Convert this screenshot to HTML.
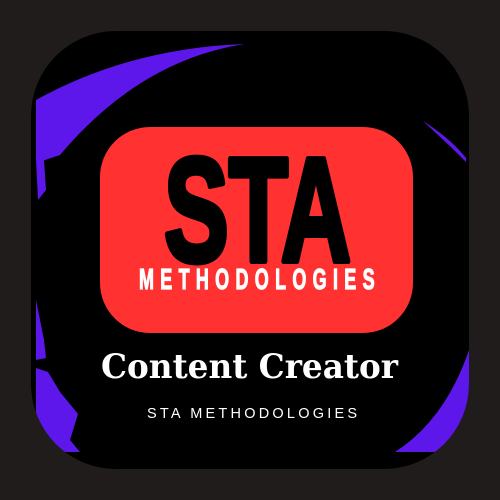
<!DOCTYPE html>
<html><head><meta charset="utf-8"><style>
html,body{margin:0;padding:0;background:#201c1b;width:500px;height:500px;overflow:hidden}
</style></head><body>
<svg width="500" height="500" viewBox="0 0 500 500" xmlns="http://www.w3.org/2000/svg">
<defs><clipPath id="c"><rect x="31" y="31" width="438" height="438" rx="85"/></clipPath></defs>
<rect x="31" y="31" width="438" height="438" rx="85" fill="#000"/>
<g clip-path="url(#c)" fill="#5e17eb">
<path d="M36 100 Q130 48 245 44 Q140 60 60 155 L45 160 L36 160 Z"/>
<path d="M36 160 L44 160 L46 190 L38 200 Z"/>
<path d="M36 300 L44 340 L46 358 L36 360 Z"/>
<path d="M36 368 L48 372 L60 392 L78 414 L70 440 L80 452 L36 452 Z"/>
<path d="M469 350 Q445 420 395 452 L469 452 Z"/>
<path d="M423 121 L452 148 L466 162 L466 158 Q450 138 423 121 Z"/>
</g>
<rect x="100" y="127" width="313" height="206" rx="50" fill="#ff3131"/>
<text x="164" y="261" font-family="Liberation Sans, sans-serif" font-weight="bold" font-size="148" textLength="187" lengthAdjust="spacingAndGlyphs" fill="#000" stroke="#000" stroke-width="6" stroke-linejoin="round">STA</text>
<g transform="translate(139,289) scale(0.62,1)">
<text x="0" y="0" font-family="Liberation Sans, sans-serif" font-weight="bold" font-size="29" textLength="380" lengthAdjust="spacing" fill="#fff" stroke="#fff" stroke-width="1.2">METHODOLOGIES</text>
</g>
<text x="101" y="378" font-family="DejaVu Serif, serif" font-weight="bold" font-size="34" textLength="297" lengthAdjust="spacingAndGlyphs" fill="#fff">Content Creator</text>
<text x="147" y="418" font-family="Liberation Sans, sans-serif" font-size="14.5" textLength="210" lengthAdjust="spacing" fill="#fff">STA METHODOLOGIES</text>
</svg>
</body></html>
